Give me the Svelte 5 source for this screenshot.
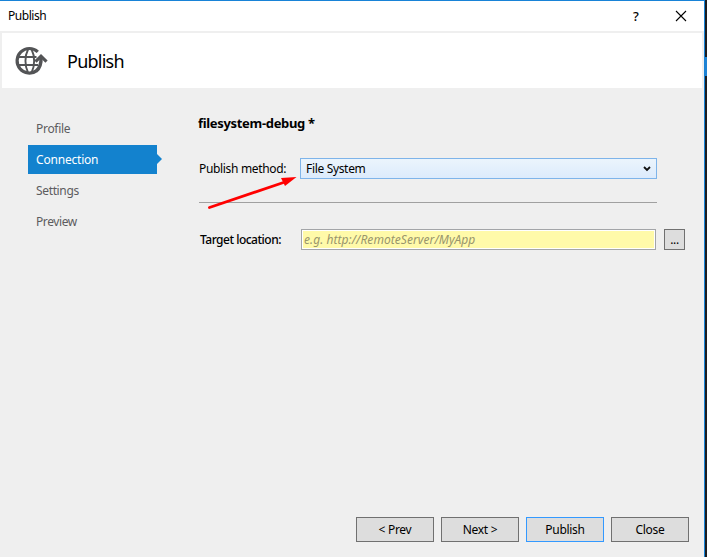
<script>
  const steps = ['Profile', 'Connection', 'Settings', 'Preview'];
  const spacing = [-0.3, -0.2, -0.35, -0.4];
  const active = 'Connection';
  const actions = ['< Prev', 'Next >', 'Publish', 'Close'];
</script>

<div class="screen">
  <main class="dialog">
    <div class="titlebar">
      <span class="title">Publish</span>
      <span class="help">?</span>
      <svg class="close" width="12" height="12" viewBox="0 0 12 12"><path d="M1 1L11 11M11 1L1 11" stroke="#000" stroke-width="1.1" fill="none" /></svg>
    </div>
    <header>
      <svg class="globe" width="34" height="30" viewBox="0 0 34 30" fill="none" stroke="#535456">
        <path d="M23.8 5.8A12.3 12.3 0 1 0 22.8 24.6" stroke-width="3.2" />
        <path d="M4 11H22.5M4 19H24M14 3.5C10.6 10 10.6 20 14 26.5M17.6 3.5C21 10 21 20 17.6 26.5" stroke-width="1.9" />
        <path d="M27 10.5C27.4 17.5 26.4 21.6 22.4 24.9" stroke-width="3.4" />
        <path d="M21.5 15.6L27 10.2L32.5 15.6" stroke-width="3.2" />
      </svg>
      <h1>Publish</h1>
    </header>
    <div class="body">
      <nav>
        {#each steps as step, i}
          <div class="step" class:active={step === active}><span style="letter-spacing:{spacing[i]}px">{step}</span></div>
        {/each}
      </nav>
      <section>
        <h2>filesystem-debug *</h2>
        <div class="row method">
          <label for="method">Publish method:</label>
          <div class="select" id="method">
            <span>File System</span>
            <svg width="8" height="6" viewBox="0 0 8 6"><path d="M1 1L4 4L7 1" stroke="#111" stroke-width="1.8" fill="none" /></svg>
          </div>
        </div>
        <div class="rule"></div>
        <div class="row target">
          <label for="target">Target location:</label>
          <div class="input" id="target"><span>e.g. http://RemoteServer/MyApp</span></div>
          <button class="browse">...</button>
        </div>
      </section>
    </div>
    <footer>
      {#each actions as action}
        <button class:primary={action === 'Publish'}>{action}</button>
      {/each}
    </footer>
    <svg class="pointer" width="92" height="36" viewBox="0 0 92 36"><path d="M4.5 32.5L80 7" stroke="#f00" stroke-width="2.9" stroke-linecap="round" /><path d="M91.5 2L76 3L80 11Z" fill="#f00" /></svg>
  </main>
  <aside><i></i></aside>
</div>

<style>
  :global(body) { margin: 0; overflow: hidden; }
  .screen { display: flex; width: 707px; height: 557px; font: 12px/16px "Noto Sans", "Open Sans", sans-serif; color: #000; }
  .dialog { position: relative; box-sizing: border-box; width: 705px; height: 557px; background: #efefef; border-top: 1px solid #1883d7; border-right: 1px solid #1883d7; display: flex; flex-direction: column; }
  .titlebar { height: 30px; background: #fff; display: flex; align-items: center; padding-left: 8px; }
  .title { flex: 1; letter-spacing: -0.45px; }
  .help { width: 10px; margin-right: 32px; font-size: 13px; font-weight: 500; }
  .close { margin-right: 17px; }
  header { height: 55px; margin: 2px 2px 0; background: #fff; display: flex; align-items: center; }
  .globe { margin-left: 12px; }
  h1 { margin: 0 0 0 19px; font-size: 18px; line-height: 24px; font-weight: 400; letter-spacing: -0.75px; }
  .body { flex: 1; display: flex; }
  nav { width: 129px; margin-left: 28px; padding-top: 26px; }
  .step { position: relative; height: 29px; margin-bottom: 2px; padding-left: 8px; line-height: 29px; color: #5c5c5e; }
  .active { background: #1382ce; color: #fff; }
  .active::after { content: ""; position: absolute; left: 129px; top: 9px; border: solid transparent; border-width: 5.5px 0 5.5px 5.5px; border-left-color: #1382ce; }
  section { width: 487px; margin-left: 41px; padding-top: 26px; }
  h2 { margin: 0; font-size: 13px; line-height: 18px; font-weight: 700; letter-spacing: -0.32px; }
  .row { display: flex; align-items: center; height: 21px; }
  .method { margin-top: 26px; }
  label { width: 101px; margin-left: 1px; white-space: nowrap; letter-spacing: -0.33px; }
  .select { box-sizing: border-box; width: 357px; height: 21px; padding: 0 5px; border: 1px solid #7eb4ea; background: linear-gradient(#ebf4fc, #dcebfc); display: flex; align-items: center; justify-content: space-between; letter-spacing: -0.33px; }
  .rule { width: 458px; height: 1px; margin: 23px 0 26px 1px; background: #a0a0a0; }
  .target label { width: 101px; margin-left: 2px; font-weight: 500; letter-spacing: -0.5px; }
  .input { box-sizing: border-box; width: 355px; height: 21px; border: 1px solid #a3a5a8; padding-left: 2px; background: #fffaa9; box-shadow: inset 0 0 0 1px #fff; line-height: 19px; color: #98956c; font-style: italic; letter-spacing: 0.06px; }
  button { box-sizing: border-box; width: 78px; height: 25px; padding: 0; border: 1px solid #707070; background: #ddd; font: inherit; color: #000; letter-spacing: -0.3px; }
  .browse { width: 21px; height: 21px; margin-left: 8px; line-height: 18px; }
  footer { display: flex; justify-content: flex-end; gap: 7px; padding: 0 15px 15px 0; }
  footer .primary { border-color: #3399ff; }
  .pointer { position: absolute; left: 205px; top: 174px; }
  aside { width: 2px; height: 557px; background: #1c1d20; padding-top: 57px; box-sizing: border-box; }
  aside i { display: block; height: 19px; background: #1f82d3; }
</style>
